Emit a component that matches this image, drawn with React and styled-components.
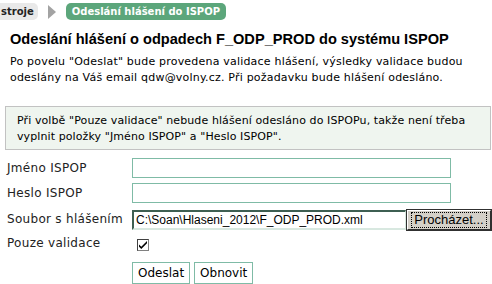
import React from 'react';
import styled, { createGlobalStyle } from 'styled-components';

const GlobalStyle = createGlobalStyle`
  body {
    margin: 0;
    background: #fff;
    font-family: "DejaVu Sans", Verdana, sans-serif;
    font-size: 11px;
    color: #000;
  }
`;

const Page = styled.div`
  width: 492px;
  height: 284px;
  overflow: hidden;
`;

const Crumbs = styled.div`
  display: flex;
  align-items: center;
  height: 21px;
  padding-top: 1px;
`;

const Tab = styled.div`
  height: 17px;
  line-height: 17px;
  padding: ${({ $active }) => ($active ? '0 6px' : '0 4px 0 1px')};
  border-radius: ${({ $active }) => ($active ? '5px' : '0 5px 5px 0')};
  background: ${({ $active }) => ($active ? '#5ca67b' : '#e9e9e9')};
  color: ${({ $active }) => ($active ? '#fff' : '#222')};
  font-weight: bold;
  font-size: 10px;
  white-space: nowrap;
`;

const Arrow = styled.span`
  width: 0;
  height: 0;
  margin: 0 10px 0 10px;
  border-top: 7px solid transparent;
  border-bottom: 7px solid transparent;
  border-left: 8px solid #a3a3a3;
`;

const Title = styled.h1`
  margin: 8px 0 0 10px;
  font-family: "Liberation Sans", Arial, sans-serif;
  font-size: 14.6px;
  font-weight: bold;
  line-height: 18px;
`;

const Intro = styled.p`
  margin: 6px 0 0 10px;
  line-height: 16px;
  letter-spacing: 0.2px;
`;

const Info = styled.div`
  margin: 20px 1px 0 5px;
  padding: 6px 11px 4px;
  background: #eff5ef;
  border: 1px solid #c2c2c2;
  line-height: 16px;
  letter-spacing: 0.1px;
`;

const Form = styled.div`
  display: grid;
  grid-template-columns: 125px auto;
  margin: 8px 0 0 7px;
  row-gap: 5px;
  align-items: center;
`;

const Label = styled.div`
  color: #222;
  font-size: 12px;
  letter-spacing: 0.3px;
`;

const TextInput = styled.div`
  width: 317px;
  height: 18px;
  border: 1px solid #7fbba6;
`;

const FileRow = styled.div`
  display: flex;
  align-items: center;
  margin-top: 2px;
`;

const FileField = styled.div`
  width: 269px;
  height: 16px;
  padding-left: 2px;
  border-top: 2px solid #3e5f52;
  border-left: 2px solid #3e5f52;
  border-bottom: 2px solid #d8e8e0;
  border-right: 1px solid #d8e8e0;
  font-family: "Liberation Sans", Arial, sans-serif;
  font-size: 12px;
  line-height: 16px;
  white-space: nowrap;
`;

const BrowseButton = styled.button`
  width: 84px;
  height: 20px;
  margin-left: 1px;
  padding: 0 2px;
  border: 1px solid #fff;
  border-right-color: #303030;
  border-bottom-color: #303030;
  outline: 1px solid #303030;
  background: #d4d0c8;
  font-family: "Liberation Sans", Arial, sans-serif;
  font-size: 13px;

  span {
    display: inline-block;
    padding: 0 2px;
    border: 1px dotted #000;
    line-height: 14px;
  }
`;

const Check = styled.div`
  width: 10px;
  height: 10px;
  margin: 4px 0 0 5px;
  border: 1px solid #808080;
  border-top-color: #404040;
  border-left-color: #404040;
  background: #fff;
  display: flex;
  align-items: center;
  justify-content: center;
`;

const Buttons = styled.div`
  display: flex;
  gap: 4px;
  padding-top: 6px;
`;

const Button = styled.button`
  height: 22px;
  padding: 0 5px;
  background: #fff;
  border: 1px solid #7fbba6;
  font-family: "DejaVu Sans", Verdana, sans-serif;
  font-size: 12px;
  color: #000;
`;

export default function App() {
  return (
    <Page>
      <GlobalStyle />
      <Crumbs>
        <Tab>stroje</Tab>
        <Arrow />
        <Tab $active>Odeslání hlášení do ISPOP</Tab>
      </Crumbs>
      <Title>Odeslání hlášení o odpadech F_ODP_PROD do systému ISPOP</Title>
      <Intro>
        Po povelu "Odeslat" bude provedena validace hlášení, výsledky validace budou
        <br />
        odeslány na Váš email qdw@volny.cz. Při požadavku bude hlášení odesláno.
      </Intro>
      <Info>
        Při volbě "Pouze validace" nebude hlášení odesláno do ISPOPu, takže není třeba
        <br />
        vyplnit položky "Jméno ISPOP" a "Heslo ISPOP".
      </Info>
      <Form>
        <Label>Jméno ISPOP</Label>
        <TextInput />
        <Label>Heslo ISPOP</Label>
        <TextInput />
        <Label>Soubor s hlášením</Label>
        <FileRow>
          <FileField>C:\Soan\Hlaseni_2012\F_ODP_PROD.xml</FileField>
          <BrowseButton><span>Procházet...</span></BrowseButton>
        </FileRow>
        <Label>Pouze validace</Label>
        <Check>
          <svg width="8" height="8" viewBox="0 0 7 7">
            <path d="M0 3 L2 5 L7 0 L7 2 L2 7 L0 5 Z" fill="#000" />
          </svg>
        </Check>
        <div />
        <Buttons>
          <Button>Odeslat</Button>
          <Button>Obnovit</Button>
        </Buttons>
      </Form>
    </Page>
  );
}
